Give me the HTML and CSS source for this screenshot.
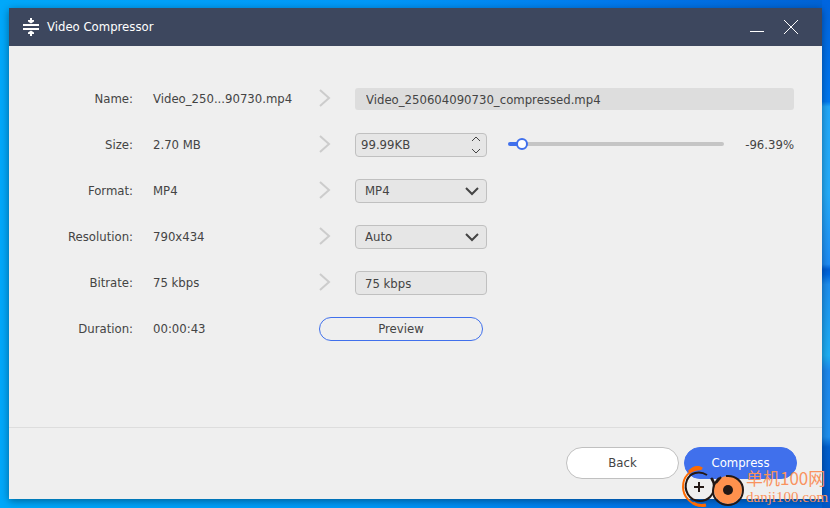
FILE: index.html
```html
<!DOCTYPE html>
<html lang="en">
<head>
    <meta charset="UTF-8">
    <meta name="viewport" content="width=device-width, initial-scale=1.0">
    <title>Video Compressor</title>
    <link rel="stylesheet" href="styles.css">
</head>
<body>
    <div class="window">
        <header class="titlebar">
            <svg class="app-icon" width="16" height="20" viewBox="0 0 16 20" fill="#fff">
                <path d="M0 7h16v2H0zM0 11h16v2H0zM7 1h2v2h2v1.500l-3 2l-3-2V3h2zM7 19h2v-2h2v-1.500l-3-2l-3 2v1.500h2z"/>
            </svg>
            <h1>Video Compressor</h1>
            <button class="window-button" aria-label="Minimize">
                <svg width="16" height="16" viewBox="0 0 16 16"><path d="M1 12.500h14" stroke="#fff"/></svg>
            </button>
            <button class="window-button" aria-label="Close">
                <svg width="16" height="16" viewBox="0 0 16 16"><path d="M1 1l14 14M15 1L1 15" stroke="#fff"/></svg>
            </button>
        </header>

        <main class="settings">
            <label class="label" for="name">Name:</label>
            <span>Video_250...90730.mp4</span>
            <svg class="arrow" width="12" height="18" viewBox="0 0 12 18"><path d="M1 1l9 8l-9 8"/></svg>
            <input class="name-field" id="name" type="text" value="Video_250604090730_compressed.mp4">

            <label class="label" for="size">Size:</label>
            <span>2.70 MB</span>
            <svg class="arrow" width="12" height="18" viewBox="0 0 12 18"><path d="M1 1l9 8l-9 8"/></svg>
            <div class="size-row">
                <div class="spinner">
                    <input id="size" type="text" value="99.99KB">
                    <div class="steps">
                        <button aria-label="Increase">
                            <svg width="10" height="6" viewBox="0 0 10 6"><path d="M1 5l4-4l4 4"/></svg>
                        </button>
                        <button aria-label="Decrease">
                            <svg width="10" height="6" viewBox="0 0 10 6"><path d="M1 1l4 4l4-4"/></svg>
                        </button>
                    </div>
                </div>
                <input class="slider" type="range" min="0" max="100" value="4" aria-label="Target size" style="--value: 4%">
                <output class="percent" for="size">-96.39%</output>
            </div>

            <label class="label" for="format">Format:</label>
            <span>MP4</span>
            <svg class="arrow" width="12" height="18" viewBox="0 0 12 18"><path d="M1 1l9 8l-9 8"/></svg>
            <div class="select">
                <select id="format">
                    <option>MP4</option>
                </select>
                <svg width="16" height="10" viewBox="0 0 16 10"><path d="M2 2l6 6l6-6"/></svg>
            </div>

            <label class="label" for="resolution">Resolution:</label>
            <span>790x434</span>
            <svg class="arrow" width="12" height="18" viewBox="0 0 12 18"><path d="M1 1l9 8l-9 8"/></svg>
            <div class="select">
                <select id="resolution">
                    <option>Auto</option>
                </select>
                <svg width="16" height="10" viewBox="0 0 16 10"><path d="M2 2l6 6l6-6"/></svg>
            </div>

            <label class="label" for="bitrate">Bitrate:</label>
            <span>75 kbps</span>
            <svg class="arrow" width="12" height="18" viewBox="0 0 12 18"><path d="M1 1l9 8l-9 8"/></svg>
            <input class="field" id="bitrate" type="text" value="75 kbps" readonly>

            <span class="label">Duration:</span>
            <span>00:00:43</span>
            <button class="preview">Preview</button>
        </main>

        <footer class="footer">
            <button class="button">Back</button>
            <button class="button primary">Compress</button>
        </footer>
    </div>

    <div class="watermark">
        <svg width="65" height="42" viewBox="0 0 65 42" fill="none">
            <path d="M20 3C8 4 2 11 2 21c0 9 7 17 17 19" stroke="#ff6a00" stroke-width="2"/>
            <path d="M8 6C13 1 17 0 21 3M12 37c5 3 9 3 13 2" stroke="#ff6a00" stroke-width="3"/>
            <path d="M26 9C18 4 9 7 6 14c-4 10 2 21 13 21c8 0 14-6 14-14c0-3-1-6-3-9" stroke="#231815" stroke-width="2"/>
            <path d="M18 16v10M13 21h10" stroke="#231815" stroke-width="2"/>
            <circle cx="47" cy="24" r="14" fill="#ff914d"/>
            <path d="M45 10c10-1 17 6 17 14c0 9-7 15-15 15s-15-6-15-14c0-6 3-10 6-13M31 12l3 7M40 11l-5 6" stroke="#231815" stroke-width="2"/>
            <circle cx="47" cy="24" r="5" fill="#231815"/>
        </svg>
        <div class="watermark-text">
            <span class="site-name" lang="zh">单机100网</span>
            <span class="site-url">danji100.com</span>
        </div>
    </div>
</body>
</html>
```
FILE: styles.css
```css
* {
    box-sizing: border-box;
}
body {
    margin: 0;
    min-height: 100vh;
    padding: 8px 8px 9px 9px;
    display: flex;
    font-family: "DejaVu Sans Condensed", "Noto Sans", sans-serif;
    font-size: 13px;
    line-height: 18px;
    color: #444;
    background:
        linear-gradient(180deg, #0065df 0, #0078f0 20%, #22a8fa 21%, #25adfa 38%, #1e8cf5 52%, #0060d8 53%, #0068e0 54%, #1e8ff0 56%, #1eb0f5 70%, #1e88ee 73%, #1e90f0 86%, #0060d0 88%, #0058c8 100%) right / 8px 100% no-repeat,
        linear-gradient(90deg, #00a8fa 0, #0098f8 45%, #0078ec 75%, #0062d4 100%);
}
button, input, select {
    font: inherit;
    color: inherit;
}
button {
    cursor: pointer;
}
.window {
    flex: 1;
    display: flex;
    flex-direction: column;
    background-color: #efefef;
    box-shadow: 0 2px 8px rgba(0,0,0,0.4);
}
.titlebar {
    display: flex;
    align-items: center;
    height: 38px;
    padding: 0 23px 0 14px;
    background-color: #3d475e;
    color: #fff;
}
.titlebar h1 {
    flex: 1;
    margin: 0 0 0 8px;
    font-size: 13px;
    font-weight: normal;
}
.window-button {
    display: flex;
    margin-left: 18px;
    padding: 0;
    border: none;
    background: none;
}
.settings {
    flex: 1;
    display: grid;
    grid-template-columns: 124px 146px 16px 1fr;
    grid-auto-rows: 46px;
    column-gap: 20px;
    align-items: center;
    padding: 30px 28px 0 0;
}
.label {
    text-align: right;
}
.arrow {
    margin-bottom: 2px;
    fill: none;
    stroke: #ccc;
    stroke-width: 2;
}
.name-field {
    width: 100%;
    height: 22px;
    padding: 0 11px;
    border: none;
    border-radius: 3px;
    background-color: #ddd;
}
.field, .spinner, .select select {
    width: 132px;
    height: 24px;
    border: 1px solid #c0c0c0;
    border-radius: 4px;
    background-color: #e6e6e6;
}
.field {
    padding: 0 9px;
}
.size-row {
    display: flex;
    align-items: center;
}
.spinner {
    display: flex;
}
.spinner input {
    flex: 1;
    min-width: 0;
    padding: 0 5px;
    border: none;
    background: none;
}
.steps {
    display: flex;
    flex-direction: column;
    justify-content: space-between;
    padding: 2px 5px 2px 0;
}
.steps button {
    display: flex;
    padding: 0;
    border: none;
    background: none;
}
.steps svg, .select svg {
    fill: none;
    stroke: #444;
}
.slider {
    flex: 1;
    min-width: 0;
    height: 12px;
    margin: 0 21px 2px;
    appearance: none;
    background: none;
}
.slider::-webkit-slider-runnable-track {
    height: 4px;
    border-radius: 2px;
    background: linear-gradient(90deg, #4070ec var(--value), #c5c5c5 var(--value));
}
.slider::-webkit-slider-thumb {
    appearance: none;
    width: 12px;
    height: 12px;
    margin-top: -4px;
    border: 2px solid #4070ec;
    border-radius: 50%;
    background-color: #fff;
}
.select {
    position: relative;
    width: 132px;
}
.select select {
    display: block;
    padding: 0 9px;
    appearance: none;
}
.select svg {
    position: absolute;
    top: 7px;
    right: 7px;
    stroke-width: 2;
    pointer-events: none;
}
.preview {
    grid-column: 3 / 5;
    width: 164px;
    height: 24px;
    padding: 0;
    border: 1px solid #4070ec;
    border-radius: 12px;
    background: none;
}
.footer {
    display: flex;
    justify-content: flex-end;
    gap: 5px;
    padding: 19px 25px 20px;
    border-top: 1px solid #ddd;
}
.button {
    width: 113px;
    height: 32px;
    border: 1px solid #c0c0c0;
    border-radius: 16px;
    background-color: #fff;
}
.button.primary {
    border-color: #4070ec;
    background-color: #4070ec;
    color: #fff;
}
.watermark {
    position: absolute;
    right: 3px;
    bottom: 0;
    display: flex;
    pointer-events: none;
    color: #f9935f;
}
.watermark-text {
    display: flex;
    flex-direction: column;
    width: 81px;
    white-space: nowrap;
}
.site-name {
    font-family: "Noto Sans CJK SC", sans-serif;
    font-size: 17px;
    line-height: 24px;
}
.site-url {
    font-family: "Liberation Serif", serif;
    font-size: 15px;
    line-height: 14px;
}
```
